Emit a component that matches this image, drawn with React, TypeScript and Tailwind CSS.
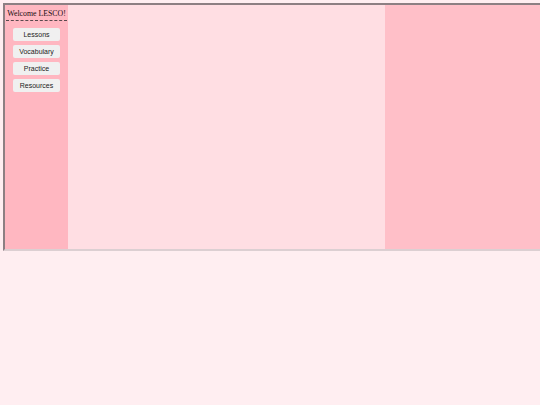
export default function App() {
  const links = ["Lessons", "Vocabulary", "Practice", "Resources"];
  return (
    <div className="h-screen w-full overflow-hidden bg-[#ffeef1] pt-[3px] pl-[3px]">
      <div className="flex h-[248px] w-[560px] border-2 border-r-0 border-t-[#8d7f83] border-l-[#8d7f83] border-b-[#dccfd2]">
        <aside className="flex w-[63px] shrink-0 flex-col items-center bg-[#ffb7c1] pt-[3px]">
          <h1 className="whitespace-nowrap border-b border-dashed border-[#5a4a4e] px-[1px] pb-[1px] text-center font-['Liberation_Serif',serif] text-[7.8px] leading-[11px] text-[#1a0d10]">
            Welcome LESCO!
          </h1>
          <nav className="mt-[7px] flex flex-col gap-[4px]">
            {links.map((l) => (
              <button
                key={l}
                className="h-[13px] w-[47px] rounded-[2px] bg-[#f0f0f0] font-['Liberation_Sans',sans-serif] text-[7px] leading-[13px] text-[#222]"
              >
                {l}
              </button>
            ))}
          </nav>
        </aside>
        <main className="w-[317px] shrink-0 bg-[#ffdee3]" />
        <section className="flex-1 bg-[#ffbfc8]" />
      </div>
    </div>
  );
}
